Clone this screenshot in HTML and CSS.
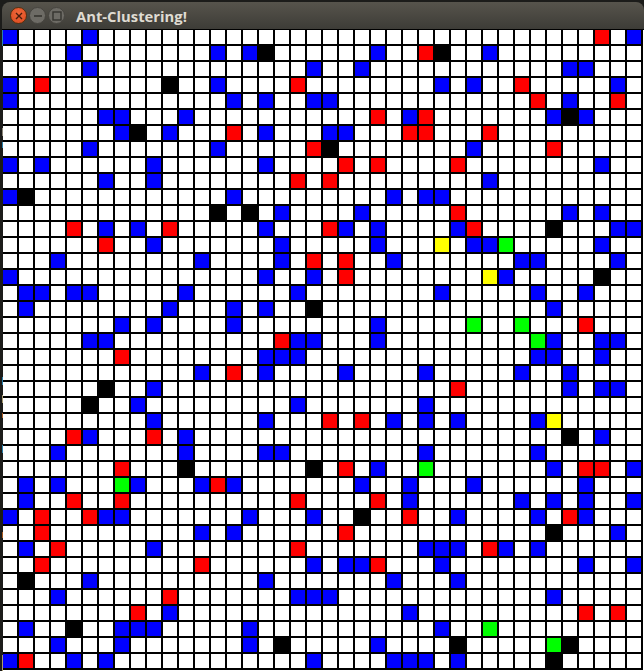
FILE: index.html
```html
<!DOCTYPE html>
<html lang="en">
<head>
  <meta charset="UTF-8" />
  <title>Ant-Clustering!</title>
  <link rel="stylesheet" href="styles.css">
</head>
<body>
  <div class="titlebar">
    <div class="win-btn close">
      <svg width="10" height="10" viewBox="0 0 10 10"><path d="M2 2 L8 8 M8 2 L2 8" stroke="#4a1c0c" stroke-width="1.4" fill="none"/></svg>
    </div>
    <div class="win-btn">
      <svg width="10" height="10" viewBox="0 0 10 10"><path d="M1 5 H9" stroke="#35342f" stroke-width="1.6" fill="none"/></svg>
    </div>
    <div class="win-btn">
      <svg width="10" height="10" viewBox="0 0 10 10"><rect x="1" y="1" width="8" height="8" stroke="#35342f" stroke-width="1.4" fill="none"/></svg>
    </div>
    <span class="win-title">Ant-Clustering!</span>
  </div>

  <div class="content">
    <div class="edge"></div>
    <div id="board" class="board"></div>
  </div>

  <script src="script.js"></script>
</body>
</html>
```

FILE: styles.css
```css
html, body {
  margin: 0;
  height: 671px;
  overflow: hidden;
}

body {
  background: #1c1c1a;
  font-family: "Open Sans", sans-serif;
}

.titlebar {
  display: flex;
  align-items: center;
  height: 27px;
  margin: 2px 0 0 2px;
  padding-left: 8px;
  background: linear-gradient(#57544c, #3d3c37);
  border-bottom: 1px solid #000;
  border-radius: 8px 8px 0 0;
}

.win-btn {
  display: flex;
  align-items: center;
  justify-content: center;
  width: 15px;
  height: 15px;
  margin-right: 2px;
  border-radius: 50%;
  background: #6d6b65;
  border: 1px solid #46443f;
}

.win-btn.close {
  background: radial-gradient(circle at 50% 35%, #f2683a, #d9491f);
  border-color: #57300f;
}

.win-title {
  margin-left: 9px;
  font-size: 14.8px;
  font-weight: 700;
  color: #dfdbd2;
}

.content {
  display: flex;
  height: 641px;
}

.edge {
  width: 3px;
  flex-shrink: 0;
  background:
    linear-gradient(to bottom,
      transparent 0, #2a7fa8 0, #2a7fa8 16px, transparent 16px,
      transparent 98px, #8a8578 98px, #8a8578 106px, transparent 106px,
      transparent 112px, #2a7fa8 112px, #2a7fa8 118px, transparent 118px,
      transparent 347px, #2a7fa8 347px, #2a7fa8 355px, transparent 355px,
      transparent 365px, #a89a70 365px, #a89a70 373px, transparent 373px,
      transparent 383px, #a85a20 383px, #a85a20 388px, transparent 388px,
      transparent 415px, #2a7fa8 415px, #2a7fa8 423px, transparent 423px,
      transparent 502px, #a85a20 502px, #a85a20 508px, transparent 508px,
      transparent 625px, #a89a70 625px, #a89a70 641px, transparent 641px)
    right top / 1px 100% no-repeat;
}

.board {
  flex: 1;
  background: #fff;
}

.grid {
  display: grid;
  grid-template-columns: repeat(40, 14px);
  grid-auto-rows: 14px;
  gap: 2px;
  width: 640px;
  padding: 0 0 2px 0;
  background: #000;
}

.cell {
  background: #fff;
}

.cell.b { background: #0000ff; }
.cell.r { background: #ff0000; }
.cell.k { background: #000; }
.cell.g { background: #00ff00; }
.cell.y { background: #ffff00; }
```

FILE: script.js
```js
// filled cells per row: colour letter + column
const rows = [
  "b0 b5 r37 b39",
  "b4 b13 b15 k16 b23 r26 k27 b30",
  "b5 b19 b22 b35 b36",
  "b0 r2 k10 b13 r18 b27 b29 r32 b38",
  "b0 b14 b16 b19 b20 r33 b35 r38",
  "b6 b7 b11 r23 b25 r26 b34 k35 b36",
  "b7 k8 b10 r14 b16 b20 b21 r25 r26 r30",
  "b5 b13 r19 k20 b29 r34",
  "b0 b2 b9 b16 r21 r23 r28 b37",
  "b6 b9 r18 r20 b30",
  "b0 k1 b14 b24 b26 b27",
  "k13 k15 b17 b22 r28 b35 b37",
  "r4 b6 b8 r10 b16 r20 b21 b23 b28 r29 k34 b38 b39",
  "r6 b9 b17 b23 y27 b29 b30 g31 b37",
  "b3 b12 b17 r19 r21 b24 b32 b33 b38",
  "b0 b16 b19 r21 y30 b31 k37",
  "b1 b2 b4 b5 b11 b18 b27 b33 b36",
  "b1 b10 b14 b16 k19 b34",
  "b7 b9 b14 b23 g29 g32 r36",
  "b5 b6 r17 b18 b19 b23 g33 b34 b37 b38",
  "r7 b16 b17 b18 b33 b34 b37",
  "b12 r14 b16 b21 b26 b32 b35",
  "k6 b9 r28 b35 b37 b38",
  "k5 b8 b18 b26",
  "b9 b16 r20 r22 b24 b26 b28 b33 y34",
  "r4 b5 r9 b11 k35 b37",
  "b3 b11 b16 b17 b26 b33",
  "r7 k11 k19 r21 b23 g26 b34 r36 r37 b39",
  "b1 b3 g7 b8 b12 r13 b14 b22 b25 b29 b36",
  "b1 r4 r7 r18 r23 b25 b32 b34 b36 b39",
  "b0 r2 r5 b6 b7 b15 b19 k22 r25 b28 b33 r35 b36",
  "r2 b12 b14 r21 k34 b38",
  "b1 r3 b9 r18 b26 b27 b28 r30 b31 b33",
  "r2 r12 b19 b21 b22 r23 b27 b36 b39",
  "k1 b5 b16 b24 b28",
  "b3 r10 b18 b19 b20 b34",
  "r8 b10 b25 r36 r38",
  "b1 k4 b7 b8 b9 b15 b27 g30",
  "b3 b7 b15 k17 b23 k28 g34 k35",
  "b0 r1 b4 b6 b19 b24 b25 b26 b28 k34"
];

const board = document.getElementById("board");
const grid = document.createElement("div");
grid.className = "grid";

rows.forEach(row => {
  const filled = {};
  row.split(" ").forEach(item => {
    filled[item.slice(1)] = item[0];
  });
  for (let col = 0; col < 40; col++) {
    const cell = document.createElement("div");
    cell.className = filled[col] ? "cell " + filled[col] : "cell";
    grid.appendChild(cell);
  }
});

board.appendChild(grid);
```
